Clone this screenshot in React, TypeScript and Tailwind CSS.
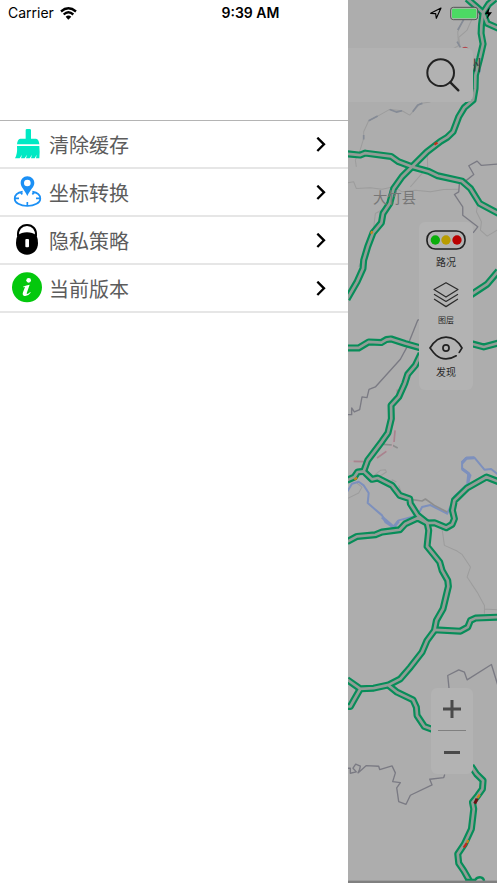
import type { ReactNode } from "react";

const roads = [
  "M360 -4L385 18L408 38L403 75L402 100L408 132L398 175L385 225L384 265L378 300L352 322L335 350L318 395L300 412L280 424L240 455L195 500L165 530L140 565L128 610L108 640L103 668L78 698L62 740L50 780L48 805L30 845L0 897",
  "M444 -4L425 12L408 38L420 70L454 85",
  "M0 461L40 465L55 459L132 469L155 485L195 500L245 514L272 527L345 543L370 565L398 610L454 640",
  "M454 812L420 852L370 885",
  "M0 1043L35 1043L65 1025L103 1027L118 1018L132 1016L175 1030L225 1044",
  "M365 1028L410 1040L454 1028",
  "M222 1060L205 1095L182 1122L173 1150L155 1190L132 1215L133 1255L123 1297L105 1323L62 1380L50 1413",
  "M0 1440L22 1430L32 1415L50 1413L75 1437L92 1433L135 1455L158 1485L188 1495L190 1510L212 1545L240 1567L245 1590L240 1638L278 1685L285 1710L302 1740L304 1758L288 1825L268 1860L262 1890L240 1920L225 1955L190 2000L160 2035L125 2053L80 2063L40 2065L0 2037",
  "M0 1624L30 1608L85 1603L105 1595L158 1588L175 1570L212 1553L240 1568L262 1567L298 1582L315 1572L322 1555L316 1530L322 1500L360 1463L418 1430L454 1444",
  "M262 1888L340 1892L362 1880L370 1860L385 1853L454 1850",
  "M40 2065L20 2100L10 2118L0 2118",
  "M125 2055L150 2075L198 2098L208 2120L210 2145L232 2178L265 2190",
  "M372 2296L388 2320L408 2340L406 2365L392 2385L376 2405L380 2425L373 2485L352 2530L332 2560L335 2588L350 2610L367 2640",
];

const borders = [
  "M450 492L403 496L390 483L365 497L380 523L355 543L337 550L335 575L322 583L347 620L347 645L392 680L378 698",
  "M218 958L212 960L180 1040L160 1077L85 1160L66 1167L60 1192L45 1190L38 1228L22 1235L14 1223L14 1243L0 1243",
  "M306 2065L302 2025L335 2008L352 2015L360 2038L433 1992L452 2054",
  "M3 2303L10 2303L10 2318L28 2314L18 2303L26 2291L40 2297L38 2306L33 2317L58 2295L95 2297L98 2307L135 2296L145 2317L137 2343L160 2346L149 2362L155 2403L177 2411L190 2384L255 2353L248 2336L290 2331L293 2322",
];

const lanes = [
  "M380 45L360 90L335 112L338 135L320 145",
  "M352 50L332 95L334 130",
  "M250 306L220 310L188 345L165 332L128 328L92 348L65 362L50 395L50 415L40 448L25 480L28 500",
  "M0 548L20 545L28 565L70 563L105 567L140 560L165 575L205 570L250 575L290 568L335 567",
  "M240 455L242 500L190 560M140 610L85 640L78 700L35 800",
  "M392 610L388 635L403 665L400 690L420 708L450 690",
  "M0 1495L35 1478L45 1460L30 1448M75 1430L100 1410L115 1408L118 1415L95 1430M135 1455L135 1438L148 1445M155 1455L162 1475",
  "M285 1585L292 1635L330 1652L345 1662L370 1700L360 1730L390 1775L412 1815L412 1840M412 1826L450 1828",
];

const rivers = [
  "M0 1475L15 1450L35 1444L50 1455L65 1478L62 1508L105 1545L115 1565L140 1582L155 1560L212 1545L225 1520L250 1514L300 1540L312 1515",
  "M320 1490L362 1450L370 1425L345 1405L345 1385L358 1372L382 1372L412 1408L432 1406L452 1422",
];

function MapCanvas() {
  return (
    <svg
      aria-hidden="true"
      className="absolute inset-0 h-full w-full"
      viewBox="3 0 447 2649"
      preserveAspectRatio="xMinYMin slice"
      fill="none"
      strokeLinejoin="round"
    >
      <g stroke="#9c9c9c" strokeWidth="3">
        {lanes.map((d) => <path key={d} d={d} />)}
      </g>
      <g stroke="#858b96" strokeWidth="5">
        <path d="M352 55L332 90M330 125L340 142M65 362L92 348M128 328L148 336L165 332M197 335L212 315L226 310M50 405L50 418" />
      </g>
      <g stroke="#7a7a83" strokeWidth="4">
        {borders.map((d) => <path key={d} d={d} />)}
      </g>
      <g stroke="#7d90bd" strokeWidth="6">
        {rivers.map((d) => <path key={d} d={d} />)}
        <path d="M345 1388L358 1374L382 1372M345 1405L365 1420L362 1450M105 1550L140 1580L155 1562" strokeWidth="9" />
      </g>
      <path d="M190 1497L225 1502L235 1496L262 1515L300 1535M110 1332L135 1334L152 1343" stroke="#8d8d8d" strokeWidth="5" />
      <path d="M3 1383L20 1383M52 1384L90 1372L135 1340L145 1290L147 1250" stroke="#b9a6ab" strokeWidth="4" />
      <path d="M20 1383L52 1384M90 1373L118 1353M141 1325L144 1290M151 1185L151 1168" stroke="#a9838e" strokeWidth="5" />
      <g stroke="#078d59" strokeWidth="21">
        {roads.map((d) => <path key={d} d={d} />)}
      </g>
      <g stroke="#929d97" strokeWidth="8">
        {roads.map((d) => <path key={d} d={d} />)}
      </g>
      <path d="M345 148A10 10 0 0 1 363 148" stroke="#b3484f" strokeWidth="4" />
      <path d="M355 2638L384 2638Q390 2629 401 2630Q410 2632 411 2641" stroke="#078d59" strokeWidth="7" />
      <g strokeWidth="7">
        <path d="M262 433L271 427" stroke="#c0301c" />
        <path d="M72 701L76 693M22 1438L30 1432M391 2392L398 2382M360 2527L363 2518" stroke="#c98216" />
        <path d="M383 2409L390 2394" stroke="#6d0f12" strokeWidth="9" />
        <path d="M350 2541L359 2528" stroke="#c5261c" />
      </g>
      <g className="font-['Noto_Sans_CJK_SC',sans-serif]">
        <text x="78" y="609" fontSize="43" fill="#777777">大竹县</text>
        <text x="356" y="214" fontSize="48" fill="#3c3c3c">州</text>
      </g>
      <rect x="0" y="2640" width="450" height="12" fill="#808080" />
    </svg>
  );
}

const menu: { label: string; icon: ReactNode }[] = [
  {
    label: "清除缓存",
    icon: (
      <svg viewBox="36 57 90 90" className="size-[30px]" fill="#00e9c4" aria-hidden="true">
        <path d="M77 60Q77 57 81 57H89Q93 57 93 60V86H108Q117 88 118 103H51Q52 88 61 86H77Z" />
        <path d="M51 108H118Q120 128 118 145H108L110 134L104 145H93L96 134L89 145H78L81 134L74 145H63L66 134L59 145H45Q53 130 51 108Z" />
      </svg>
    ),
  },
  {
    label: "坐标转换",
    icon: (
      <svg viewBox="36 201 90 90" className="size-[30px] overflow-visible" fill="none" stroke="#1b90f5" strokeWidth="5" aria-hidden="true">
        <path d="M68 245C52 248 44 256 44 266C44 278 60 288 82 288S121 278 121 266C121 256 113 248 97 245M44 265H57M108 265H121M82 276V288M62 248L67 253M102 248L97 253" />
        <path d="M82 199C70 199 62 208 62 219C62 231 75 241 82 258C89 241 103 231 103 219C103 208 94 199 82 199ZM82 209A10 10 0 1 1 82 229A10 10 0 1 1 82 209Z" fill="#1b90f5" fillRule="evenodd" stroke="none" />
      </svg>
    ),
  },
  {
    label: "隐私策略",
    icon: (
      <svg viewBox="36 345 90 90" className="size-[30px] overflow-visible" aria-hidden="true">
        <path d="M54 378C52 358 64 345 81 345S110 358 108 378" fill="none" stroke="#000" strokeWidth="6" />
        <path d="M52 377Q65 367 81 367T110 377Q114 386 114 399C114 420 100 434 81 434S48 420 48 399Q48 386 52 377Z" fill="#000" />
        <rect x="76" y="387" width="11" height="25" rx="3" fill="#fff" />
      </svg>
    ),
  },
  {
    label: "当前版本",
    icon: (
      <svg viewBox="36 489 90 90" className="size-[30px] overflow-visible" aria-hidden="true">
        <circle cx="81" cy="532" r="45" fill="#04c80d" />
        <circle cx="86" cy="511" r="7" fill="#fff" />
        <path d="M69 530Q79 525 89 524L80 550Q80 555 91 546L92 548Q83 560 73 558Q66 556 69 547L75 531L69 532Z" fill="#fff" />
      </svg>
    ),
  },
];

function StatusBar() {
  return (
    <header className="absolute inset-x-0 top-0 z-20 grid h-[26px] grid-cols-3 items-center pr-1 pl-2 font-['Inter',sans-serif] text-sm text-black">
      <div className="flex items-center gap-1.5">
        <span>Carrier</span>
        <svg viewBox="0 0 51 38" className="h-[13px] w-[17px]" fill="none" stroke="#000" strokeWidth="7" aria-hidden="true">
          <path d="M3 13Q25 -6 48 13M11 22Q25 9 40 22" />
          <path d="M17 29Q25 21 34 29L25 38Z" fill="#000" stroke="none" />
        </svg>
      </div>
      <span className="text-center font-semibold">9:39 AM</span>
      <div className="flex items-center justify-end">
        <svg viewBox="0 0 36 36" className="mr-2 size-3" fill="none" stroke="#000" strokeWidth="3.500" strokeLinejoin="round" aria-hidden="true">
          <path d="M2 19L33 3L19 34L17 20Z" />
        </svg>
        <svg viewBox="0 0 129 45" className="h-[15px] w-[43px]" aria-hidden="true">
          <rect x="2" y="4" width="81" height="37" rx="8" fill="#b5b5b5" stroke="#555" strokeWidth="3" />
          <rect x="6" y="8" width="73" height="29" rx="4" fill="#4cd964" />
          <path d="M87 17Q93 22 87 28Z" fill="#444" />
          <path d="M119 4L104 25H114L110 40L126 19H116Z" fill="#000" />
        </svg>
      </div>
    </header>
  );
}

function ToolButton({ label, small, children }: { label: string; small?: boolean; children: ReactNode }) {
  return (
    <button type="button" className="flex flex-col items-center text-[#2b2b2b]">
      {children}
      <span className={small ? "text-[8px] leading-4" : "text-[10px] leading-4"}>{label}</span>
    </button>
  );
}

export default function App() {
  return (
    <div className="relative flex min-h-screen overflow-hidden bg-white font-['Noto_Sans_CJK_SC',sans-serif]">
      <StatusBar />
      <aside className="w-[70%] bg-white pt-[120px]">
        <nav aria-label="菜单">
          <ul className="border-t border-[#b4b4b4]">
            {menu.map((item) => (
              <li key={item.label}>
                <button type="button" className="flex h-12 w-full items-center border-b-2 border-[#e6e6e6] pr-[22px] pl-3 text-left">
                  {item.icon}
                  <span className="ml-[7px] flex-1 pt-0.5 text-[20px] leading-7 text-[#5c5c5c]">{item.label}</span>
                  <svg viewBox="0 0 30 45" className="h-[15px] w-[10px]" fill="none" stroke="#000" strokeWidth="7" aria-hidden="true">
                    <path d="M4 2L24 22L4 42" />
                  </svg>
                </button>
              </li>
            ))}
          </ul>
        </nav>
      </aside>

      <main className="relative flex-1 overflow-hidden bg-[#adadad]">
        <MapCanvas />
        <div className="absolute top-12 right-6 left-0 flex h-[54px] items-center justify-end rounded-r-md bg-[#b2b2b2] pr-[13px]">
          <button type="button" aria-label="搜索">
            <svg viewBox="0 0 102 102" className="size-[34px]" fill="none" stroke="#222" strokeWidth="6" strokeLinecap="round" aria-hidden="true">
              <circle cx="44" cy="44" r="40" />
              <path d="M73 73L97 97" strokeWidth="7" />
            </svg>
          </button>
        </div>

        <div className="absolute top-[222px] right-6 flex h-[168px] w-[54px] flex-col items-center rounded-md bg-[#b3b3b3] pt-2">
          <ToolButton label="路况">
            <svg viewBox="0 0 120 60" className="mb-1 h-5 w-10" aria-hidden="true">
              <rect x="3" y="3" width="114" height="54" rx="25" fill="#b3b3b3" stroke="#222" strokeWidth="5" />
              <circle cx="28" cy="30" r="14" fill="#0aae0a" />
              <circle cx="60" cy="30" r="14" fill="#b99c00" />
              <circle cx="93" cy="30" r="14" fill="#b90000" />
            </svg>
          </ToolButton>
          <div className="mt-3">
            <ToolButton label="图层" small>
              <svg viewBox="0 0 76 76" className="mb-1 size-[26px]" fill="none" stroke="#2b2b2b" strokeWidth="3.500" strokeLinejoin="round" aria-hidden="true">
                <path d="M38 2L73 22L38 44L3 22ZM3 36L38 57L73 36M3 50L38 72L73 50" />
              </svg>
            </ToolButton>
          </div>
          <div className="mt-2">
            <ToolButton label="发现">
              <svg viewBox="0 0 100 70" className="mb-1 h-6 w-[34px]" fill="none" stroke="#222" strokeWidth="5" strokeLinecap="round" aria-hidden="true">
                <path d="M80 58Q66 67 50 67C25 67 12 48 3 35C15 15 29 3 50 3S86 15 97 35L89 48" />
                <circle cx="50" cy="35" r="9" />
              </svg>
            </ToolButton>
          </div>
        </div>

        <div className="absolute top-[688px] right-6 flex h-[86px] w-[42px] flex-col items-center rounded-md bg-[#b3b3b3]">
          <button type="button" aria-label="放大" className="flex h-[42px] w-full items-center justify-center">
            <svg viewBox="0 0 18 18" className="size-[18px]" stroke="#4a4a4a" strokeWidth="3" aria-hidden="true">
              <path d="M9 0V18M0 9H18" />
            </svg>
          </button>
          <span className="h-px w-7 bg-[#808080]" />
          <button type="button" aria-label="缩小" className="flex h-[42px] w-full items-center justify-center">
            <svg viewBox="0 0 16 3" className="h-[3px] w-4" fill="#4a4a4a" aria-hidden="true">
              <rect width="16" height="3" />
            </svg>
          </button>
        </div>
      </main>
    </div>
  );
}
